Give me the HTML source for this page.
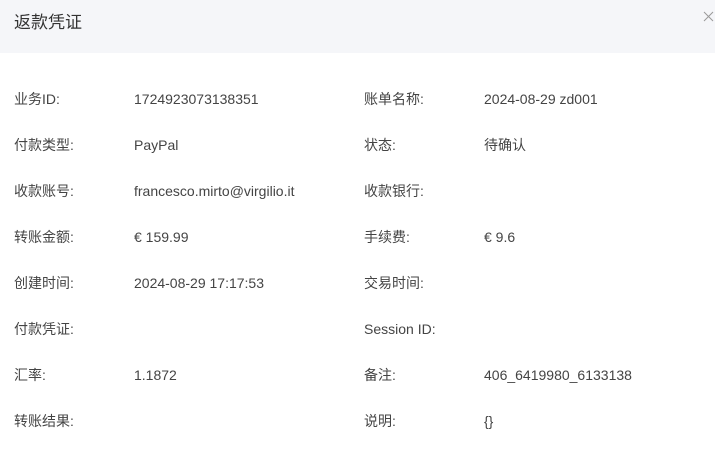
<!DOCTYPE html>
<html><head><meta charset="utf-8"><style>
body{margin:0;width:715px;height:461px;background:#fff;font-family:"Liberation Sans","Noto Sans CJK SC",sans-serif;color:#444;overflow:hidden;position:relative}
.hd{position:absolute;left:0;top:0;width:715px;height:53px;background:#f5f6f9}
.t{position:absolute;left:14px;top:11px;font-size:17px;color:#333;line-height:24px}
.x{position:absolute;left:703px;top:11px;width:11px;height:11px}
.c{position:absolute;font-size:14px;line-height:20px;white-space:nowrap;margin-top:1px}
</style></head><body>
<div class="hd"><div class="t">返款凭证</div>
<svg class="x" viewBox="0 0 11 11"><path d="M1 1L10 10M10 1L1 10" stroke="#999" stroke-width="1"/></svg></div>
<div class="c" style="left:14px;top:88px">业务ID:</div><div class="c" style="left:134px;top:88px">1724923073138351</div>
<div class="c" style="left:364px;top:88px">账单名称:</div><div class="c" style="left:484px;top:88px">2024-08-29 zd001</div>
<div class="c" style="left:14px;top:134px">付款类型:</div><div class="c" style="left:134px;top:134px">PayPal</div>
<div class="c" style="left:364px;top:134px">状态:</div><div class="c" style="left:484px;top:134px">待确认</div>
<div class="c" style="left:14px;top:180px">收款账号:</div><div class="c" style="left:134px;top:180px">francesco.mirto@virgilio.it</div>
<div class="c" style="left:364px;top:180px">收款银行:</div>
<div class="c" style="left:14px;top:226px">转账金额:</div><div class="c" style="left:134px;top:226px">€ 159.99</div>
<div class="c" style="left:364px;top:226px">手续费:</div><div class="c" style="left:484px;top:226px">€ 9.6</div>
<div class="c" style="left:14px;top:272px">创建时间:</div><div class="c" style="left:134px;top:272px">2024-08-29 17:17:53</div>
<div class="c" style="left:364px;top:272px">交易时间:</div>
<div class="c" style="left:14px;top:318px">付款凭证:</div>
<div class="c" style="left:364px;top:318px">Session ID:</div>
<div class="c" style="left:14px;top:364px">汇率:</div><div class="c" style="left:134px;top:364px">1.1872</div>
<div class="c" style="left:364px;top:364px">备注:</div><div class="c" style="left:484px;top:364px">406_6419980_6133138</div>
<div class="c" style="left:14px;top:410px">转账结果:</div>
<div class="c" style="left:364px;top:410px">说明:</div><div class="c" style="left:484px;top:410px">{}</div>
</body></html>
